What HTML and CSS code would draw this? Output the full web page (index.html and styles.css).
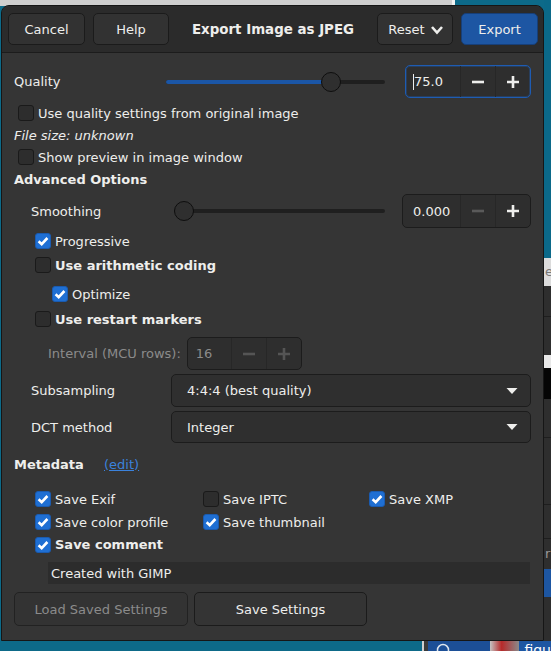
FILE: index.html
```html
<!DOCTYPE html>
<html>
<head>
<meta charset="utf-8">
<link rel="stylesheet" href="styles.css">
</head>
<body>
<div class="desktop">
  <div class="bg-top"></div>
  <div class="bg-top-edge"></div>
  <div class="bg-strip">
    <div class="seg teal" style="height:258px"></div>
    <div class="seg light" style="height:28px"><span>e</span></div>
    <div class="seg dark lined" style="height:31px"></div>
    <div class="seg dark" style="height:38px"></div>
    <div class="seg white" style="height:13px"></div>
    <div class="seg black" style="height:31px"></div>
    <div class="seg dark lined" style="height:39px"></div>
    <div class="seg dark lined" style="height:67px"></div>
    <div class="seg dark lined" style="height:34px"></div>
    <div class="seg dark" style="height:30px"><span class="strip-txt">r</span></div>
    <div class="seg blue" style="height:28px"></div>
    <div class="seg dark" style="height:54px"></div>
  </div>
  <div class="bg-bottom">
    <div class="bb-frame"></div>
    <div class="bb-blue"><svg width="14" height="14" viewBox="0 0 14 14"><circle cx="7" cy="9" r="5.5" fill="none" stroke="#dfe6ee" stroke-width="1.5"/></svg></div>
    <div class="bb-pic"></div>
    <div class="bb-text">figu</div>
  </div>

  <div class="dialog">
    <header class="hb">
      <button class="btn hb-btn">Cancel</button>
      <button class="btn hb-btn">Help</button>
      <div class="title">Export Image as JPEG</div>
      <button class="btn hb-btn reset">Reset
        <svg width="14" height="10" viewBox="0 0 14 10"><path d="M2 2 L7 7.5 L12 2" fill="none" stroke="#eeeeec" stroke-width="2.6" stroke-linejoin="miter"/></svg>
      </button>
      <button class="btn hb-btn suggested">Export</button>
    </header>

    <main class="content">
      <div class="row quality">
        <div class="lbl lbl-q">Quality</div>
        <div class="slider s-quality">
          <div class="track"></div>
          <div class="fill"></div>
          <div class="knob"></div>
        </div>
        <div class="spin spin-q focused">
          <div class="spin-val"><span class="caret"></span>75.0</div>
          <div class="spin-btn"><svg width="14" height="14" viewBox="0 0 14 14"><path d="M1 7 H13" stroke="#eeeeec" stroke-width="2.6"/></svg></div>
          <div class="spin-btn"><svg width="14" height="14" viewBox="0 0 14 14"><path d="M1 7 H13 M7 1 V13" stroke="#eeeeec" stroke-width="2.6"/></svg></div>
        </div>
      </div>

      <label class="row chk r-use"><span class="cb"></span>Use quality settings from original image</label>
      <div class="row r-fs"><em>File size: unknown</em></div>
      <label class="row chk r-prev"><span class="cb"></span>Show preview in image window</label>
      <div class="row r-adv"><strong>Advanced Options</strong></div>

      <div class="row smoothing">
        <div class="lbl lbl-s">Smoothing</div>
        <div class="slider s-smooth">
          <div class="track"></div>
          <div class="knob knob-s"></div>
        </div>
        <div class="spin spin-s">
          <div class="spin-val">0.000</div>
          <div class="spin-btn"><svg width="14" height="14" viewBox="0 0 14 14"><path d="M1 7 H13" stroke="#5a5a5a" stroke-width="2.6"/></svg></div>
          <div class="spin-btn"><svg width="14" height="14" viewBox="0 0 14 14"><path d="M1 7 H13 M7 1 V13" stroke="#eeeeec" stroke-width="2.6"/></svg></div>
        </div>
      </div>

      <label class="row chk ind1 r-prog"><span class="cb on"><svg width="16" height="16" viewBox="0 0 16 16"><path d="M3.6 8.2 L6.7 11.2 L12.4 5" fill="none" stroke="#fff" stroke-width="2.6"/></svg></span>Progressive</label>
      <label class="row chk ind1 r-arith"><span class="cb"></span><strong>Use arithmetic coding</strong></label>
      <label class="row chk ind2 r-opt"><span class="cb on"><svg width="16" height="16" viewBox="0 0 16 16"><path d="M3.6 8.2 L6.7 11.2 L12.4 5" fill="none" stroke="#fff" stroke-width="2.6"/></svg></span>Optimize</label>
      <label class="row chk ind1 r-rst"><span class="cb"></span><strong>Use restart markers</strong></label>

      <div class="row interval">
        <div class="lbl-i">Interval (MCU rows):</div>
        <div class="spin spin-i disabled">
          <div class="spin-val">16</div>
          <div class="spin-btn"><svg width="14" height="14" viewBox="0 0 14 14"><path d="M1 7 H13" stroke="#555" stroke-width="2.6"/></svg></div>
          <div class="spin-btn"><svg width="14" height="14" viewBox="0 0 14 14"><path d="M1 7 H13 M7 1 V13" stroke="#555" stroke-width="2.6"/></svg></div>
        </div>
      </div>

      <div class="row combo-row r-sub">
        <div class="lbl-c">Subsampling</div>
        <div class="combo"><span>4:4:4 (best quality)</span><svg width="12" height="8" viewBox="0 0 12 8"><path d="M0.5 1 H11.5 L6 7 Z" fill="#eeeeec"/></svg></div>
      </div>
      <div class="row combo-row r-dct">
        <div class="lbl-c">DCT method</div>
        <div class="combo"><span>Integer</span><svg width="12" height="8" viewBox="0 0 12 8"><path d="M0.5 1 H11.5 L6 7 Z" fill="#eeeeec"/></svg></div>
      </div>

      <div class="row r-meta"><strong class="meta-lbl">Metadata</strong><a class="link">(edit)</a></div>

      <div class="meta-grid">
        <label class="chk"><span class="cb on"><svg width="16" height="16" viewBox="0 0 16 16"><path d="M3.6 8.2 L6.7 11.2 L12.4 5" fill="none" stroke="#fff" stroke-width="2.6"/></svg></span>Save Exif</label>
        <label class="chk"><span class="cb"></span>Save IPTC</label>
        <label class="chk"><span class="cb on"><svg width="16" height="16" viewBox="0 0 16 16"><path d="M3.6 8.2 L6.7 11.2 L12.4 5" fill="none" stroke="#fff" stroke-width="2.6"/></svg></span>Save XMP</label>
        <label class="chk"><span class="cb on"><svg width="16" height="16" viewBox="0 0 16 16"><path d="M3.6 8.2 L6.7 11.2 L12.4 5" fill="none" stroke="#fff" stroke-width="2.6"/></svg></span>Save color profile</label>
        <label class="chk"><span class="cb on"><svg width="16" height="16" viewBox="0 0 16 16"><path d="M3.6 8.2 L6.7 11.2 L12.4 5" fill="none" stroke="#fff" stroke-width="2.6"/></svg></span>Save thumbnail</label>
        <span></span>
        <label class="chk"><span class="cb on"><svg width="16" height="16" viewBox="0 0 16 16"><path d="M3.6 8.2 L6.7 11.2 L12.4 5" fill="none" stroke="#fff" stroke-width="2.6"/></svg></span><strong>Save comment</strong></label>
      </div>

      <div class="comment">Created with GIMP</div>

      <div class="row btn-row">
        <button class="btn btn-load" disabled>Load Saved Settings</button>
        <button class="btn btn-save">Save Settings</button>
      </div>
    </main>
  </div>
</div>
</body>
</html>
```

FILE: styles.css
```css
html, body {
  margin: 0;
  padding: 0;
}
body {
  width: 551px;
  height: 651px;
  overflow: hidden;
  font-family: "DejaVu Sans", "Noto Sans", sans-serif;
  font-size: 13px;
  color: #eeeeec;
}
.desktop {
  position: relative;
  width: 551px;
  height: 651px;
  background: #0d6a89;
  overflow: hidden;
}
.bg-top {
  position: absolute;
  left: 0;
  top: 0;
  width: 452px;
  height: 6px;
  background: #cfcfcf;
}
.bg-top-edge {
  position: absolute;
  left: 452px;
  top: 0;
  width: 3px;
  height: 6px;
  background: #f2f2f2;
}
.bg-strip {
  position: absolute;
  left: 544px;
  top: 0;
  width: 7px;
  display: flex;
  flex-direction: column;
}
.seg { width: 7px; position: relative; overflow: hidden; }
.seg.teal { background: #0b6989; }
.seg.light { background: #dcdcdc; color: #777; font-size: 13px; line-height: 28px; }
.seg.light span { margin-left: 1px; }
.seg.dark { background: #2e2e2e; }
.seg.lined { border-bottom: 1px solid #1e1e1e; box-sizing: border-box; }
.seg.white { background: #e8e8e8; }
.seg.black { background: #050505; }
.seg.blue { background: #1d56a2; }
.strip-txt { color: #999; line-height: 30px; margin-left: 1px; }
.bg-bottom {
  position: absolute;
  left: 422px;
  top: 641px;
  width: 129px;
  height: 10px;
  display: flex;
}
.bb-frame { width: 6px; background: #3a3a3a; border-left: 2px solid #cfcfcf; box-sizing: border-box; }
.bb-blue { width: 62px; background: #1c4f97; overflow: hidden; }
.bb-blue svg { margin-left: 8px; margin-top: 0; display: block; }
.bb-pic { width: 30px; background: linear-gradient(90deg, #c4c4c4, #b72a2a 40%, #8a8a8a); }
.bb-text { flex: 1; background: #1d56a2; color: #fff; font-size: 14px; line-height: 18px; padding-left: 5px; }

.dialog {
  position: absolute;
  left: 1px;
  top: 5px;
  width: 543px;
  height: 636px;
  box-sizing: border-box;
  border: 1px solid #161616;
  border-radius: 8px 8px 0 0;
  background: #353535;
  display: flex;
  flex-direction: column;
}
.hb {
  height: 47px;
  flex: none;
  box-sizing: border-box;
  border-bottom: 1px solid #1c1c1c;
  background: #2b2b2b;
  border-radius: 7px 7px 0 0;
  display: flex;
  align-items: center;
  gap: 8px;
  padding: 0 5px 0 6px;
}
.btn {
  height: 32px;
  box-sizing: border-box;
  border: 1px solid #1b1b1b;
  border-radius: 5px;
  background: #343434;
  color: #eeeeec;
  font-family: inherit;
  font-size: 13px;
  padding: 0;
  display: flex;
  align-items: center;
  justify-content: center;
}
.hb-btn { width: 76px; background: #323232; }
.hb-btn:first-child { width: 77px; }
.suggested { width: 77px; background: #1d56a3; border-color: #173f78; }
.reset { gap: 5px; padding-left: 2px; }
.reset svg { display: block; margin-top: 1px; }
.title {
  flex: 1;
  text-align: center;
  font-weight: bold;
  font-size: 13.4px;
}

.content {
  flex: 1;
  display: flex;
  flex-direction: column;
  padding: 12px 12px 0 12px;
}
.row {
  display: flex;
  align-items: center;
  height: 18px;
  flex: none;
}
.chk {
  display: flex;
  align-items: center;
  gap: 4px;
}
.cb {
  width: 16px;
  height: 16px;
  box-sizing: border-box;
  border: 1px solid #1a1a1a;
  border-radius: 3px;
  background: #2d2d2d;
  flex: none;
  display: flex;
  align-items: center;
  justify-content: center;
}
.cb.on { background: #1f6fd3; border-color: #1a5bb0; }
.cb svg { display: block; margin: -1px; }

.quality { height: 33px; }
.lbl-q { width: 152px; }
.slider { position: relative; height: 20px; flex: none; }
.s-quality { width: 219px; }
.track {
  position: absolute;
  left: 0;
  right: 0;
  top: 8px;
  height: 4px;
  border-radius: 2px;
  background: #1f1f1f;
}
.fill {
  position: absolute;
  left: 0;
  width: 160px;
  top: 8px;
  height: 4px;
  border-radius: 2px;
  background: #1b56a6;
}
.knob {
  position: absolute;
  top: 0;
  left: 155px;
  width: 20px;
  height: 20px;
  box-sizing: border-box;
  border-radius: 50%;
  border: 1px solid #0e0e0e;
  background: #2f2f2f;
}
.knob-s { left: 0; }
.spin {
  height: 33px;
  box-sizing: border-box;
  border: 1px solid #1c1c1c;
  border-radius: 5px;
  background: #2e2e2e;
  display: flex;
  flex: none;
}
.spin-q { width: 126px; margin-left: 20px; }
.spin.focused { border-color: #1e5cb3; box-shadow: inset 0 0 0 1px rgba(30, 92, 179, 0.35); }
.spin-val {
  flex: 1;
  display: flex;
  align-items: center;
  padding-left: 7px;
}
.caret { width: 1px; height: 16px; background: #eeeeec; margin-right: 0; }
.spin-btn {
  width: 34px;
  border-left: 1px solid #272727;
  display: flex;
  align-items: center;
  justify-content: center;
}
.spin-btn svg { display: block; }
.spin-s .spin-btn, .spin-q .spin-btn { width: 34px; }

.r-use { margin-top: 6px; padding-left: 4px; }
.r-fs { margin-top: 4px; }
.r-prev { margin-top: 4px; padding-left: 4px; }
.r-adv { margin-top: 4px; }

.smoothing { height: 34px; margin-top: 6px; padding-left: 17px; }
.lbl-s { width: 143px; }
.s-smooth { width: 211px; }
.spin-s { width: 129px; height: 34px; margin-left: 17px; padding-left: 3px; }

.ind1 { padding-left: 21px; }
.ind2 { padding-left: 38px; }
.r-prog { margin-top: 4px; }
.r-arith { margin-top: 6px; }
.r-opt { margin-top: 11px; }
.r-rst { margin-top: 7px; }

.interval { height: 33px; margin-top: 9px; padding-left: 34px; }
.lbl-i { color: #8b8b8b; margin-right: 6px; }
.spin-i { width: 115px; }
.spin.disabled { color: #8b8b8b; }
.spin-i .spin-val { padding-left: 8px; }

.combo-row { height: 33px; padding-left: 17px; }
.r-sub { margin-top: 4px; }
.r-dct { margin-top: 4px; height: 32px; }
.lbl-c { width: 140px; }
.combo {
  flex: 1;
  height: 100%;
  box-sizing: border-box;
  border: 1px solid #1c1c1c;
  border-radius: 5px;
  background: #2f2f2f;
  display: flex;
  align-items: center;
  justify-content: space-between;
  padding: 0 12px 0 15px;
}
.combo svg { display: block; }

.r-meta { margin-top: 12px; }
.meta-lbl { width: 90px; }
.link { color: #3b82dc; text-decoration: underline; }

.meta-grid {
  margin-top: 17px;
  padding-left: 21px;
  display: grid;
  grid-template-columns: 168px 166px auto;
  grid-auto-rows: 18px;
  row-gap: 5px;
}
.meta-grid .chk:nth-child(7) { margin-top: -1px; }

.comment {
  margin-top: 8px;
  margin-left: 34px;
  width: 482px;
  height: 22px;
  box-sizing: border-box;
  background: #2c2c2c;
  padding-left: 3px;
  display: flex;
  align-items: center;
  flex: none;
}

.btn-row { height: 34px; margin-top: 8px; gap: 6px; }
.btn-row .btn { height: 34px; }
.btn-load { width: 174px; color: #8b8b8b; background: #333; border-color: #222; }
.btn-save { width: 173px; }
```
